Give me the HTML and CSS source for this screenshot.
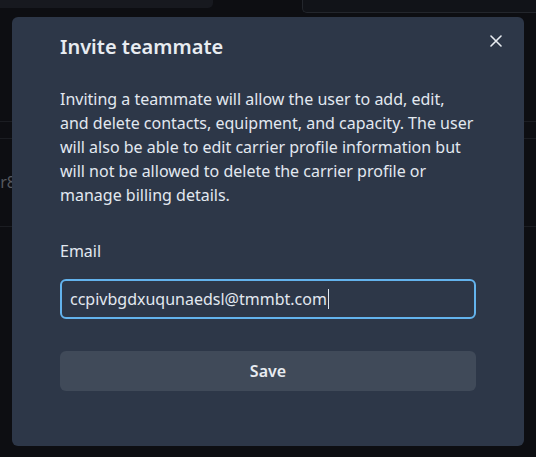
FILE: index.html
```html
<!DOCTYPE html>
<html>
<head>
<meta charset="utf-8">
<link rel="stylesheet" href="styles.css">
</head>
<body>
<div class="page">
  <div class="topbar">
    <div class="tb-left"></div>
    <div class="tb-right"></div>
  </div>
  <div class="rows">
    <div class="row r1"></div>
    <div class="row r2"><span class="bgtext">ir8</span></div>
  </div>
</div>
<div class="overlay">
  <div class="modal">
    <div class="modal-head">
      <h2 class="title">Invite teammate</h2>
      <button class="close" aria-label="Close">
        <svg width="12" height="12" viewBox="0 0 12 12"><path d="M1 1L11 11M11 1L1 11" stroke="#e8ecf1" stroke-width="1.6" stroke-linecap="round"/></svg>
      </button>
    </div>
    <p class="desc">Inviting a teammate will allow the user to add, edit, and delete contacts, equipment, and capacity. The user will also be able to edit carrier profile information but will not be allowed to delete the carrier profile or manage billing details.</p>
    <label class="label" for="email">Email</label>
    <div class="input"><span class="value">ccpivbgdxuqunaedsl@tmmbt.com</span><span class="caret"></span></div>
    <button class="save">Save</button>
  </div>
</div>
</body>
</html>
```
FILE: styles.css
```css
* { box-sizing: border-box; }
html, body { margin: 0; padding: 0; }
body {
  width: 536px;
  height: 457px;
  overflow: hidden;
  background: #0d0e12;
  font-family: "Noto Sans", "Open Sans", sans-serif;
  position: relative;
}
.page { height: 100%; }
.topbar { display: flex; justify-content: space-between; height: 13px; }
.tb-left { width: 213px; height: 8px; background: #17191f; border-bottom-right-radius: 5px; }
.tb-right { width: 234px; height: 13px; background: #111318; border: 1px solid #23262c; border-top: none; border-right: none; border-bottom-left-radius: 5px; }
.rows { margin-top: 108px; }
.row { border-top: 1px solid #1b1d22; }
.r1 { height: 17px; }
.r2 { height: 89px; border-bottom: 1px solid #1b1d22; position: relative; }
.bgtext { position: absolute; left: -4px; top: 32px; color: #55585e; font-size: 16px; }
.overlay {
  position: absolute;
  inset: 0;
  display: flex;
  justify-content: center;
  padding-top: 17px;
}
.modal {
  width: 512px;
  height: 429px;
  background: #2d3748;
  border-radius: 6px;
  padding: 16px 48px 0 48px;
  color: #e2e8f0;
  position: relative;
}
.modal-head { display: flex; justify-content: space-between; align-items: flex-start; }
.title {
  margin: 0;
  font-size: 20px;
  font-weight: 600;
  line-height: 28px;
  color: #e8ecf1;
}
.close {
  position: absolute;
  right: 16px;
  top: 12px;
  width: 24px;
  height: 24px;
  background: none;
  border: none;
  padding: 0;
  display: flex;
  align-items: center;
  justify-content: center;
}
.desc {
  margin: 26px 0 0 0;
  font-size: 16px;
  line-height: 24px;
  color: #e2e8f0;
}
.label {
  display: block;
  margin-top: 32px;
  font-size: 16px;
  line-height: 24px;
}
.input {
  margin-top: 16px;
  height: 40px;
  border: 2px solid #63b3ed;
  border-radius: 6px;
  padding: 0 8px;
  display: flex;
  align-items: center;
  font-size: 16px;
  color: #e2e8f0;
}
.caret { display: inline-block; width: 1px; height: 20px; background: #e2e8f0; margin-left: 1px; }
.save {
  margin-top: 32px;
  width: 100%;
  height: 40px;
  border: none;
  border-radius: 6px;
  background: #404a59;
  color: #e8ecf1;
  font-family: inherit;
  font-size: 16px;
  font-weight: 600;
}
```
